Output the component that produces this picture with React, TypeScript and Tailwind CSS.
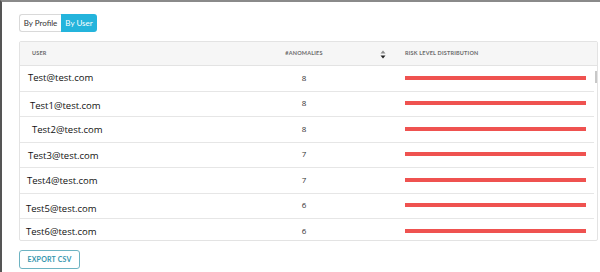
const rows = [
  { email: "Test@test.com", count: 8, pad: "pl-[8px] pt-0" },
  { email: "Test1@test.com", count: 8, pad: "pl-[10px] pt-[4px]" },
  { email: "Test2@test.com", count: 8, pad: "pl-[12px] pt-[2px]" },
  { email: "Test3@test.com", count: 7, pad: "pl-[8px] pt-[2px]" },
  { email: "Test4@test.com", count: 7, pad: "pl-[7px] pt-[2px]" },
  { email: "Test5@test.com", count: 6, pad: "pl-[6px] pt-[7px]" },
  { email: "Test6@test.com", count: 6, pad: "pl-[6px] pt-[2px]" },
];

function SortIcon() {
  return (
    <svg width="6" height="9" viewBox="0 0 6 9" className="text-[#222]">
      <path d="M3 0.5 L5.5 3.5 L0.5 3.5 Z" fill="currentColor" opacity="0.5" />
      <path d="M3 8.5 L5.5 5.5 L0.5 5.5 Z" fill="currentColor" />
    </svg>
  );
}

export default function App() {
  return (
    <div className="w-[600px] h-[272px] bg-white border-t-2 border-l-2 border-t-[#8a8a8a] border-l-[#555] font-['Lato',sans-serif] overflow-hidden">
      <div className="pl-[17px] pt-[12px]">
        <div className="flex h-[18px]">
          <button className="w-[42px] text-[8px] text-[#333] border border-[#d9d9d9] border-r-0 rounded-l-[3px] bg-white">
            By Profile
          </button>
          <button className="w-[36px] text-[8px] text-white bg-[#24b4dc] rounded-r-[3px]">
            By User
          </button>
        </div>

        <div className="mt-[9px] w-[579px] border border-[#e3e3e3] rounded-[2px] overflow-hidden">
          <div className="grid grid-cols-[192px_184px_1fr] h-[24px] bg-[#f6f6f6] border-b border-[#e3e3e3] text-[5.5px] font-bold tracking-[0.2px] text-[#6b6b6b]">
            <div className="flex items-center pl-[12px]">USER</div>
            <div className="relative flex items-center justify-center">
              #ANOMALIES
              <span className="absolute right-[10px] top-[8px]">
                <SortIcon />
              </span>
            </div>
            <div className="flex items-center pl-[9px]">RISK LEVEL DISTRIBUTION</div>
          </div>

          <div className="relative h-[174px] overflow-hidden">
            <div className="absolute right-0 top-[5px] w-[2px] h-[12px] bg-[#c8c8c8]" />
            {rows.map((r) => (
              <div
                key={r.email}
                className="grid grid-cols-[192px_184px_1fr] h-[25.5px] border-b border-[#e6e6e6] mr-[3px]"
              >
                <div className={`flex items-center text-[9.5px] text-[#111] font-['Open_Sans',sans-serif] ${r.pad}`}>
                  {r.email}
                </div>
                <div className="flex items-center justify-center text-[8px] text-[#333] font-['Open_Sans',sans-serif] pb-[1px]">
                  {r.count}
                </div>
                <div className="flex items-center pl-[9px] pr-[8px] pb-[1px]">
                  <div className="h-[4px] w-full bg-[#ef5250]" />
                </div>
              </div>
            ))}
          </div>
        </div>

        <button className="mt-[9px] h-[19px] w-[61px] border border-[#6db3c2] rounded-[3px] text-[7px] font-bold text-[#3596ae] tracking-[0.2px]">
          EXPORT CSV
        </button>
      </div>
    </div>
  );
}
